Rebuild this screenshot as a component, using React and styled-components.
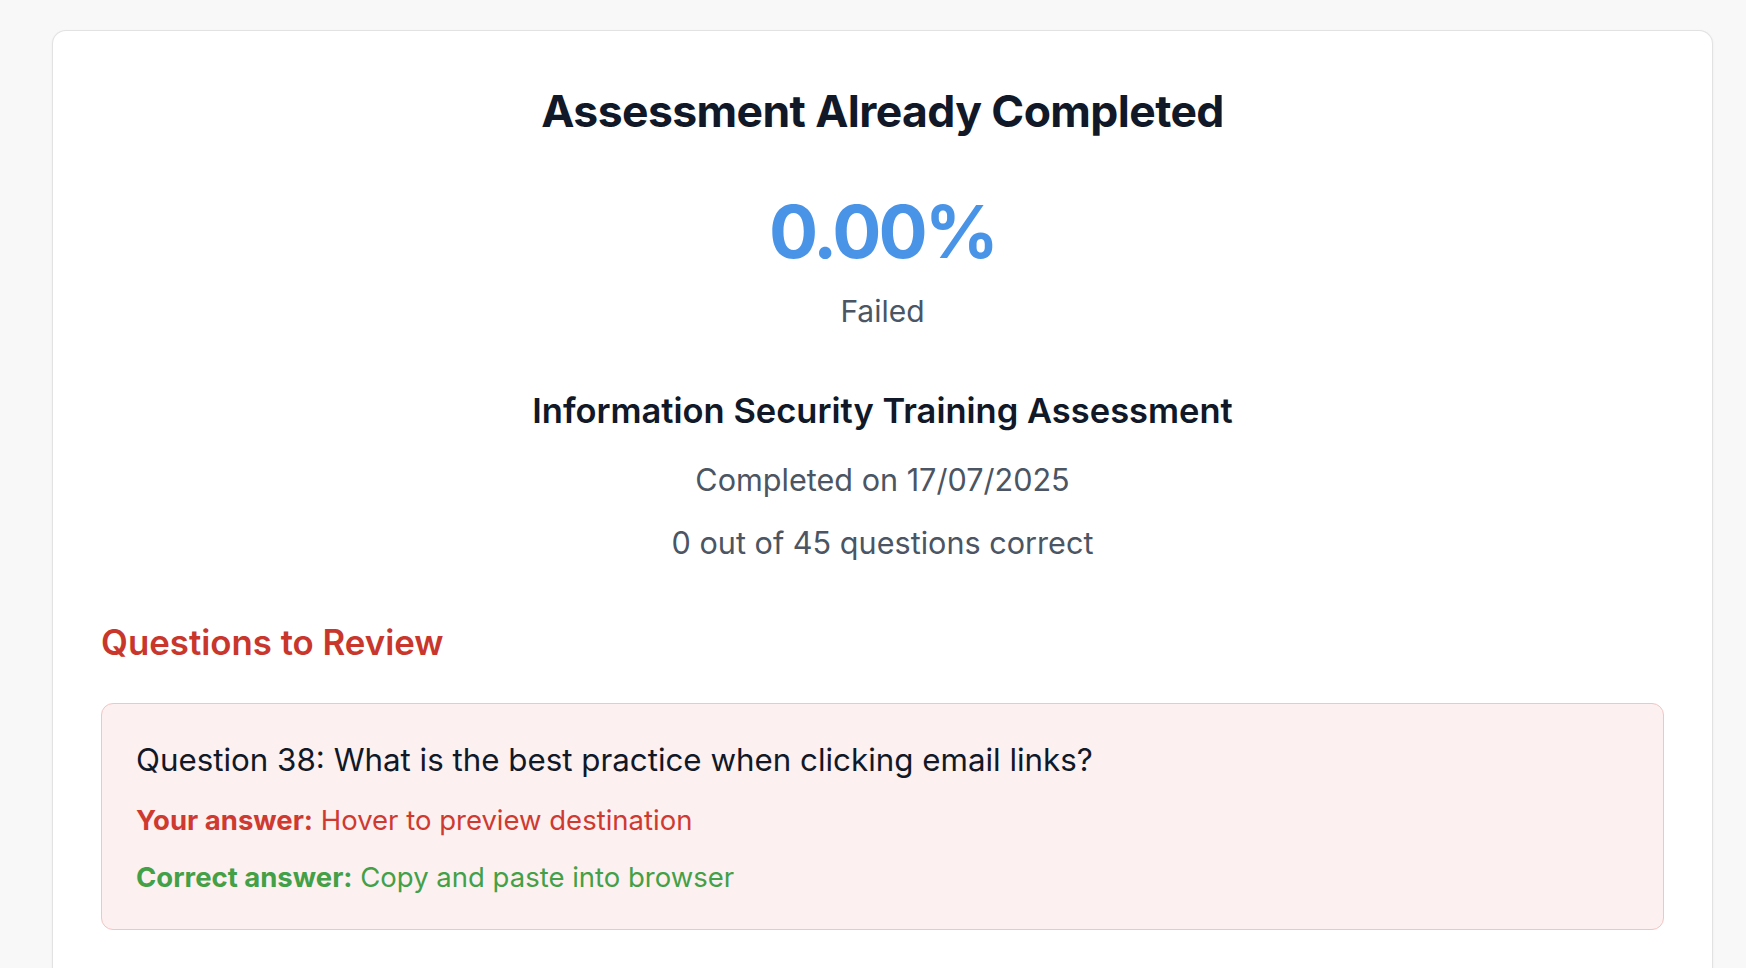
import React from "react";
import styled, { createGlobalStyle } from "styled-components";

const GlobalStyle = createGlobalStyle`
  html, body {
    margin: 0;
    padding: 0;
    background: #f8f8f8;
    font-family: Inter, "Noto Sans", "Liberation Sans", sans-serif;
  }
`;

const result = {
  title: "Assessment Already Completed",
  score: "0.00%",
  status: "Failed",
  assessment: "Information Security Training Assessment",
  completedOn: "17/07/2025",
  correct: 0,
  total: 45,
  wrong: [
    {
      number: 38,
      question: "What is the best practice when clicking email links?",
      yours: "Hover to preview destination",
      answer: "Copy and paste into browser"
    }
  ]
};

const App = () => {
  return (
    <>
      <GlobalStyle />
      <Page>
        <Card>
          <Title>{result.title}</Title>
          <Score>{result.score}</Score>
          <Status>{result.status}</Status>
          <AssessmentName>{result.assessment}</AssessmentName>
          <Meta>Completed on {result.completedOn}</Meta>
          <Meta gap="20px">
            {result.correct} out of {result.total} questions correct
          </Meta>
          <ReviewHeading>Questions to Review</ReviewHeading>
          {result.wrong.map(item => (
            <ReviewBox key={item.number}>
              <QuestionText>
                Question {item.number}: {item.question}
              </QuestionText>
              <AnswerLine tone="#cf3a30">
                <strong>Your answer:</strong> {item.yours}
              </AnswerLine>
              <AnswerLine tone="#43a047">
                <strong>Correct answer:</strong> {item.answer}
              </AnswerLine>
            </ReviewBox>
          ))}
        </Card>
      </Page>
    </>
  );
};

const Page = styled.div`
  padding: 30px 33px 0 52px;
  min-height: 968px;
  box-sizing: border-box;
`;

const Card = styled.div`
  display: flex;
  flex-direction: column;
  background: #ffffff;
  border: 1.5px solid #e2e2e2;
  border-bottom: none;
  border-radius: 14px 14px 0 0;
  box-shadow: 0 1px 3px rgba(0, 0, 0, 0.05);
  padding: 53px 48px 40px 48px;
  min-height: 900px;
  box-sizing: border-box;
`;

const Title = styled.h1`
  margin: 0;
  text-align: center;
  font-size: 44.5px;
  line-height: 55px;
  font-weight: 700;
  letter-spacing: -0.6px;
  color: #111827;
`;

const Score = styled.div`
  margin-top: 56px;
  text-align: center;
  font-size: 73px;
  line-height: 73px;
  font-weight: 700;
  letter-spacing: -3px;
  color: #4a94e8;
`;

const Status = styled.div`
  margin-top: 22px;
  text-align: center;
  font-size: 30px;
  line-height: 42px;
  color: #4b5563;
`;

const AssessmentName = styled.h2`
  margin: 57px 0 0 0;
  text-align: center;
  font-size: 34.5px;
  line-height: 43px;
  font-weight: 600;
  color: #111827;
`;

const Meta = styled.div`
  margin-top: ${props => props.gap || "26px"};
  text-align: center;
  font-size: 30.6px;
  line-height: 43px;
  color: #4b5563;
`;

const ReviewHeading = styled.h3`
  margin: 57px 0 0 0;
  font-size: 34.8px;
  line-height: 43px;
  font-weight: 600;
  color: #c9372c;
`;

const ReviewBox = styled.div`
  margin-top: 39px;
  display: flex;
  flex-direction: column;
  background: #fcf0f0;
  border: 1.5px solid #f4c4c4;
  border-radius: 12px;
  padding: 35px 34px 33px 34px;
`;

const QuestionText = styled.div`
  font-size: 31.3px;
  line-height: 43px;
  color: #111827;
`;

const AnswerLine = styled.div`
  margin-top: 20px;
  font-size: 27.5px;
  line-height: 37px;
  color: ${props => props.tone};

  strong {
    font-weight: 700;
  }
`;

export default App;
